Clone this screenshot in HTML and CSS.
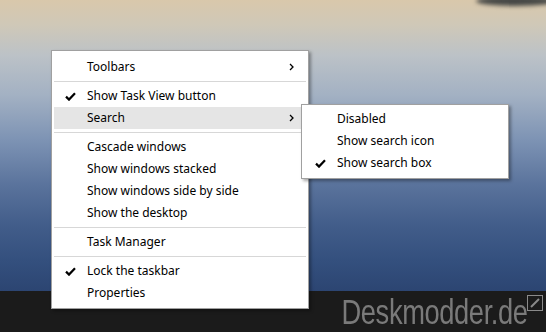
FILE: index.html
```html
<!DOCTYPE html>
<html lang="en">
<head>
	<meta charset="UTF-8">
	<title>Taskbar menu</title>
	<link rel="stylesheet" href="styles.css">
</head>
<body>
	<div class="desktop">
		<div class="wallpaper">
			<div class="island"></div>

			<ul class="menu main-menu">
				<li class="item">Toolbars<span class="arrow"><svg width="5" height="8" viewBox="0 0 5 8"><path d="M1 1l3 3-3 3" fill="none" stroke="#000" stroke-width="1.3"/></svg></span></li>
				<li class="sep"></li>
				<li class="item checked">Show Task View button</li>
				<li class="item hover">Search<span class="arrow"><svg width="5" height="8" viewBox="0 0 5 8"><path d="M1 1l3 3-3 3" fill="none" stroke="#000" stroke-width="1.3"/></svg></span></li>
				<li class="sep"></li>
				<li class="item">Cascade windows</li>
				<li class="item">Show windows stacked</li>
				<li class="item">Show windows side by side</li>
				<li class="item">Show the desktop</li>
				<li class="sep"></li>
				<li class="item">Task Manager</li>
				<li class="sep"></li>
				<li class="item checked">Lock the taskbar</li>
				<li class="item">Properties</li>
			</ul>

			<ul class="menu sub-menu">
				<li class="item">Disabled</li>
				<li class="item">Show search icon</li>
				<li class="item checked">Show search box</li>
			</ul>
		</div>
		<div class="taskbar">
			<span class="watermark">Deskmodder.de</span>
			<span class="wm-box"><svg width="14" height="14" viewBox="0 0 14 14"><path d="M3 11l8-8" stroke="#8a8a8a" stroke-width="2"/></svg></span>
		</div>
	</div>
</body>
</html>
```

FILE: styles.css
```css
html, body {
	margin: 0;
	height: 100%;
}
body {
	font-family: 'Noto Sans', 'Open Sans', sans-serif;
	font-size: 12px;
	color: #000;
	overflow: hidden;
}
.desktop {
	display: flex;
	flex-direction: column;
	height: 332px;
}
.wallpaper {
	flex: 1;
	position: relative;
	background: linear-gradient(180deg, #d9c8ab 0px, #cfc8b8 25px, #bcc2c7 55px, #a3b1c3 95px, #7d93b4 140px, #5a739c 185px, #425d8a 225px, #34507e 260px, #2c4572 291px);
}
.island {
	position: absolute;
	top: -4px;
	right: -10px;
	width: 80px;
	height: 10px;
	border-radius: 50%;
	background: #454745;
	filter: blur(2px);
}
.menu {
	list-style: none;
	margin: 0;
	padding: 5px 2px 4px;
	background: #fff;
	border: 1px solid #a0a0a0;
	box-shadow: 2px 2px 3px rgba(0, 0, 0, 0.35);
	position: absolute;
}
.main-menu {
	left: 51px;
	top: 50px;
	width: 252px;
}
.sub-menu {
	left: 301px;
	top: 104px;
	width: 202px;
	padding-top: 3px;
	padding-bottom: 4px;
}
.item {
	height: 22px;
	line-height: 22px;
	padding-left: 33px;
	position: relative;
	white-space: nowrap;
}
.item.hover {
	background: #e5e5e5;
}
.item.checked::before {
	content: '';
	position: absolute;
	left: 11px;
	top: 7px;
	width: 11px;
	height: 9px;
	background: url("data:image/svg+xml,%3Csvg xmlns='http://www.w3.org/2000/svg' width='11' height='9' viewBox='0 0 11 9'%3E%3Cpath d='M1 4.6l3 3L10 1.2' fill='none' stroke='%23000' stroke-width='2.2'/%3E%3C/svg%3E") no-repeat;
}
.arrow {
	position: absolute;
	right: 12px;
	top: 7px;
	line-height: 0;
}
.sep {
	height: 1px;
	background: #d7d7d7;
	margin: 3px 0;
}
.taskbar {
	height: 41px;
	background: #1b1b1b;
	display: flex;
	justify-content: flex-end;
	align-items: flex-end;
	padding-right: 3px;
}
.watermark {
	font-family: 'Liberation Sans', sans-serif;
	font-size: 35px;
	line-height: normal;
	color: #7a7a7a;
	transform: scaleX(0.78);
	transform-origin: right center;
	margin-right: -1px;
	letter-spacing: -0.5px;
}
.wm-box {
	width: 14px;
	height: 14px;
	border: 1px solid #8a8a8a;
	align-self: flex-start;
	margin-top: 4px;
	line-height: 0;
}
```
